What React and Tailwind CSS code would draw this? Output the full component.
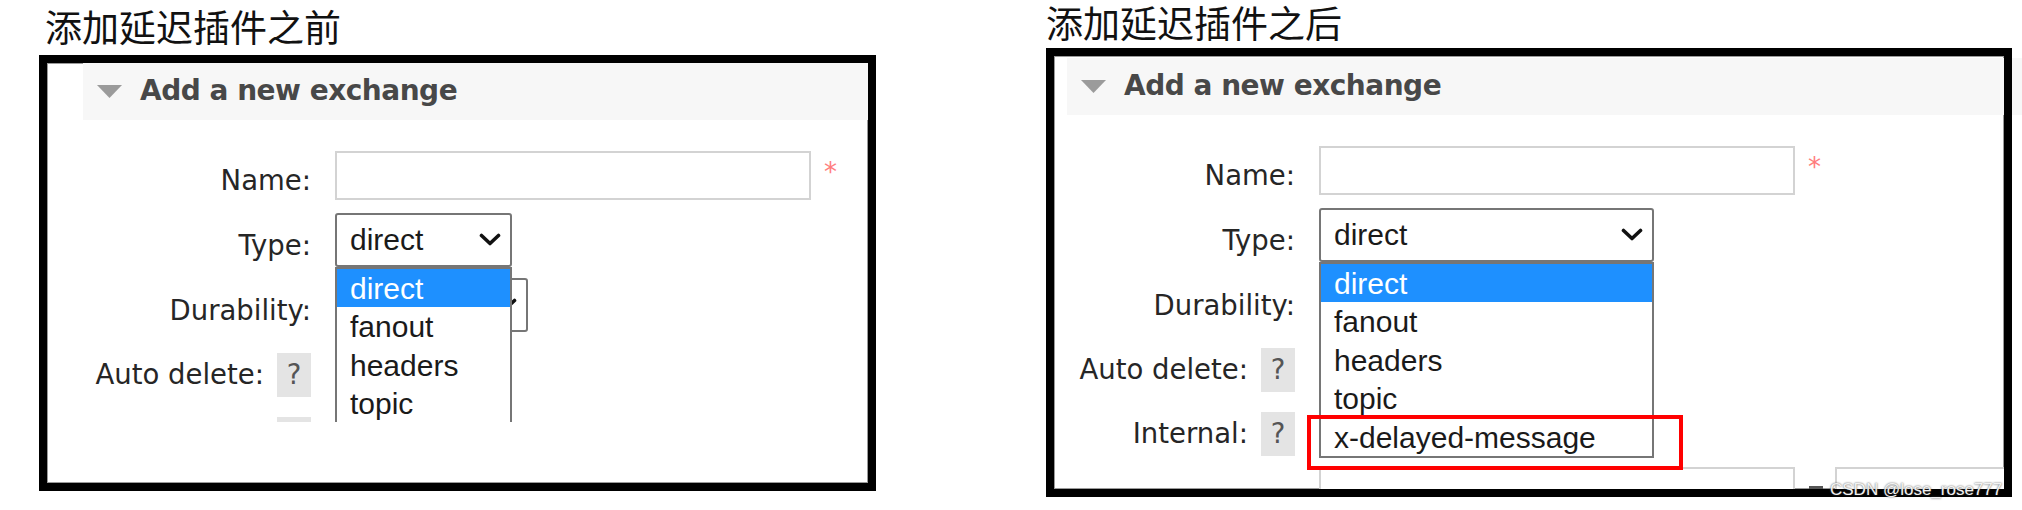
import React from "react";

const sans = "font-['DejaVu_Sans',sans-serif]";
const arial = "font-['Liberation_Sans',Arial,sans-serif]";

function Triangle() {
  return (
    <svg width="25" height="13" viewBox="0 0 25 13" className="ml-[14px] shrink-0">
      <polygon points="0,0 25,0 12.5,13" fill="#9b9b9b" />
    </svg>
  );
}

function Chevron() {
  return (
    <svg width="22" height="13" viewBox="0 0 22 13" className="shrink-0">
      <polyline
        points="2.5,2.5 11,10.5 19.5,2.5"
        fill="none"
        stroke="#111"
        strokeWidth="3.6"
        strokeLinecap="round"
        strokeLinejoin="round"
      />
    </svg>
  );
}

function Select({ value, className }) {
  return (
    <div
      className={`${className} ${arial} shrink-0 border-2 border-[#767676] rounded-[3px] bg-white flex items-center justify-between pl-[13px] pr-[9px] text-[30px] text-[#1a1a1a]`}
    >
      <span>{value}</span>
      <Chevron />
    </div>
  );
}

function HelpLabel({ text }) {
  return (
    <div className="w-[228px] h-[44px] shrink-0 flex items-center justify-end">
      {text && <span>{text}</span>}
      <span className="ml-[13px] w-[34px] h-[44px] bg-[#e4e4e4] text-[#555] flex items-center justify-center">
        {text ? "?" : ""}
      </span>
    </div>
  );
}

function ExchangeForm({ options, selectWidth, wrapClass, markLast, full }) {
  return (
    <div className={`${wrapClass} overflow-hidden`}>
      <div className="h-[57px] bg-[#f7f7f7] flex items-center">
        <Triangle />
        <h2
          className={`${sans} ml-[18px] text-[28px] tracking-[-0.5px] font-bold text-[#484848] whitespace-nowrap`}
        >
          Add a new exchange
        </h2>
      </div>

      <div className={`${sans} mt-[31px] flex flex-col text-[27.5px] text-[#262626]`}>
        <div className="h-[62px] flex items-start">
          <div className="w-[228px] h-[60px] shrink-0 flex items-center justify-end">Name:</div>
          <div className="ml-[24px] w-[476px] h-[49px] shrink-0 border-2 border-[#d3d3d3] bg-white" />
          <span className="ml-[13px] mt-[8px] text-[26px] leading-none text-[#ff7d7d]">*</span>
        </div>

        <div className="h-[64px] flex items-start">
          <div className="w-[228px] h-[66px] shrink-0 flex items-center justify-end">Type:</div>
          <div className={`relative z-10 ml-[24px] shrink-0 ${selectWidth}`}>
            <Select value="direct" className="w-full h-[54px]" />
            <div
              className={`${arial} absolute left-0 top-full w-full bg-white border-2 border-[#767676] text-[30px] text-[#1a1a1a]`}
            >
              {options.map((opt, i) => (
                <div
                  key={opt}
                  className={`h-[38.5px] pl-[13px] flex items-center whitespace-nowrap ${
                    i === 0 ? "bg-[#1e90ff] text-white" : ""
                  }`}
                >
                  {opt}
                </div>
              ))}
              {markLast && (
                <div className="absolute left-[-14px] top-[151px] w-[376px] h-[55px] border-4 border-[#ff0000]" />
              )}
            </div>
          </div>
        </div>

        <div className="h-[76px] flex items-start">
          <div className="w-[228px] h-[68px] shrink-0 flex items-center justify-end">Durability:</div>
          <div className="ml-[24px] mt-[1px]">
            <Select value="" className="w-[193px] h-[54px]" />
          </div>
        </div>

        <div className="h-[64px] flex items-start">
          <HelpLabel text="Auto delete:" />
        </div>

        <div className="h-[55px] flex items-start">
          <HelpLabel text={full ? "Internal:" : ""} />
        </div>

        {full && (
          <div className="h-[60px] flex items-start">
            <div className="w-[228px] shrink-0" />
            <div className="ml-[24px] w-[476px] h-[49px] shrink-0 border-2 border-[#d3d3d3] bg-white" />
            <div className="ml-[14px] mt-[19px] w-[14px] h-[3px] bg-[#555] shrink-0" />
            <div className="ml-[12px] w-[300px] h-[49px] shrink-0 border-2 border-[#d3d3d3] bg-white" />
          </div>
        )}
      </div>
    </div>
  );
}

export default function App() {
  return (
    <div className="relative w-[2022px] h-[510px] bg-white flex overflow-hidden">
      <div className="ml-[39px] pt-[4px] flex flex-col shrink-0">
        <h1 className="ml-[6px] text-[37px] leading-[1.2] text-[#111] font-['Noto_Sans_CJK_SC',sans-serif] whitespace-nowrap">
          添加延迟插件之前
        </h1>
        <div className="mt-[6.6px] w-[837px] h-[436px] border-[8px] border-black bg-white overflow-hidden shadow-[inset_0_0_0_1px_#9a9a9a]">
          <ExchangeForm
            options={["direct", "fanout", "headers", "topic"]}
            selectWidth="w-[177px]"
            wrapClass="pl-[36px] h-[359px]"
          />
        </div>
      </div>

      <div className="ml-[170px] flex flex-col shrink-0">
        <h1 className="text-[37px] leading-[1.2] text-[#111] font-['Noto_Sans_CJK_SC',sans-serif] whitespace-nowrap">
          添加延迟插件之后
        </h1>
        <div className="mt-[3.6px] w-[966px] h-[449px] border-[8px] border-black bg-white overflow-hidden shadow-[inset_0_0_0_1px_#9a9a9a]">
          <ExchangeForm
            options={["direct", "fanout", "headers", "topic", "x-delayed-message"]}
            selectWidth="w-[335px]"
            wrapClass="pl-[13px] pt-[2px] h-full"
            markLast
            full
          />
        </div>
      </div>

      <div className="mt-[58px] w-[10px] h-[57px] bg-[#f7f7f7] shrink-0" />

      <div
        className={`${arial} absolute left-[1830px] top-[481px] text-[17px] leading-none text-[#f2f2f2] whitespace-nowrap [text-shadow:0_0_2px_#444]`}
      >
        CSDN @lose_rose777
      </div>
    </div>
  );
}
